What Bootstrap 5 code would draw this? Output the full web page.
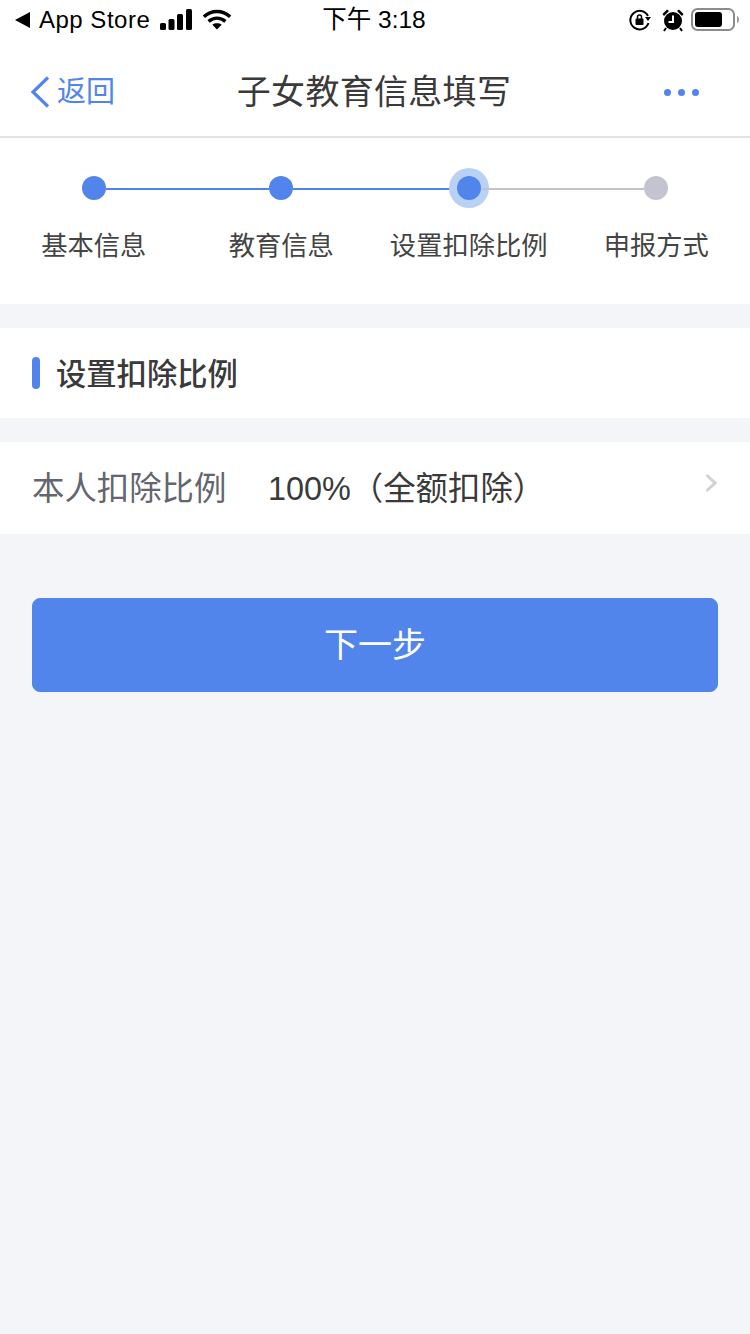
<!DOCTYPE html>
<html lang="zh-CN">
<head>
  <meta charset="UTF-8" />
  <meta name="viewport" content="width=device-width, initial-scale=1.0"/>
  <title>子女教育信息填写</title>
  <link href="https://cdn.jsdelivr.net/npm/bootstrap@5.3.3/dist/css/bootstrap.min.css" rel="stylesheet">
  <style>
    body {
      background: #f3f5f9;
      font-family: "Liberation Sans", "Noto Sans CJK SC", sans-serif;
      min-height: 1334px;
    }
    .status-bar { height: 40px; padding: 0 11px 0 15px; font-size: 24px; color: #000; }
    .status-left, .status-right { width: 270px; }
    .status-left span { letter-spacing: .5px; }
    .status-signal { margin-left: 10px; margin-right: 8px; }
    .status-time { font-size: 24.500px; line-height: 44px; padding-right: 6px; }
    .status-lock { margin-right: 9px; }
    .status-alarm { margin-right: 6px; }
    .top-nav { height: 98px; padding: 8px 51px 0 30px; border-bottom: 2px solid #e3e3e3; }
    .top-nav-left { width: 110px; }
    .top-nav-right { width: 91px; gap: 7px; }
    .back-arrow { margin-right: 7px; }
    .back-text { font-size: 29px; color: #5285ec; padding-top: 2px; }
    .top-title { font-size: 34px; letter-spacing: .3px; color: #3a3a3a; }
    .more-dot { width: 7px; height: 7px; border-radius: 50%; background: #5285ec; }
    .steps { height: 166px; padding-top: 38px; }
    .step-track { padding: 0 82px; height: 24px; }
    .step-dot { width: 24px; height: 24px; border-radius: 50%; background: #5285ec; flex: none; }
    .step-dot.now { box-shadow: 0 0 0 8px #b9d1f5; }
    .step-dot.todo { background: #c3c4d0; }
    .step-line { height: 2px; flex: 1; margin-top: 2px; background: #5285ec; }
    .step-line.todo { background: #c4c4c4; }
    .step-labels { margin-top: 28px; font-size: 26.300px; line-height: 36px; color: #444; }
    .step-labels div { flex: 1; text-align: center; }
    .section-head { height: 90px; margin-top: 24px; padding-left: 32px; font-size: 30.300px; font-weight: 500; color: #3a3a3a; }
    .section-bar { width: 8px; height: 32px; border-radius: 4px; background: #5285ec; margin-right: 16px; }
    .section-text { padding-top: 4px; }
    .ratio-row { height: 92px; margin-top: 24px; padding: 3px 33px 0 32px; font-size: 32.400px; }
    .ratio-label { width: 236px; color: #63656f; }
    .ratio-value { color: #3a3a3a; }
    .ratio-arrow { margin-top: -13px; }
    .btn-next {
      display: block; width: 686px; height: 94px; margin: 64px 0 0 32px;
      background: #5285ec; border-color: #5285ec; color: #fff;
      font-size: 34px; border-radius: 8px; padding: 0;
    }
  </style>
</head>
<body>
  <div class="bg-white">
    <div class="status-bar d-flex align-items-center justify-content-between">
      <div class="status-left d-flex align-items-center">
        <svg width="16" height="16" viewBox="0 0 16 16" class="me-2"><path d="M0 8 15 0v16z" fill="#000"/></svg>
        <span>App Store</span>
        <svg width="34" height="22" viewBox="0 0 34 22" class="status-signal" fill="#000">
          <rect x="0" y="14" width="6" height="7" rx="1.5"/><rect x="8.500" y="10" width="6" height="11" rx="1.5"/>
          <rect x="17" y="5" width="6" height="16" rx="1.5"/><rect x="26" y="0" width="6" height="21" rx="1.5"/>
        </svg>
        <svg width="30" height="24" viewBox="0 0 32 24" fill="none" stroke="#000" stroke-width="3.6">
          <path d="M2 8.500C10 1 22 1 30 8.500"/><path d="M7 13.500c5.500-4.500 12.500-4.500 18 0"/>
          <path d="M16 22l-5-5c3-2 7-2 10 0z" fill="#000" stroke="none"/>
        </svg>
      </div>
      <div class="status-time">下午 3:18</div>
      <div class="status-right d-flex align-items-center justify-content-end">
        <svg width="24" height="24" viewBox="0 0 24 24" class="status-lock">
          <path d="M20 8A9.300 9.300 0 1 0 20.500 15" fill="none" stroke="#000" stroke-width="2"/>
          <path d="M17 9h6l-3 4z" fill="#000"/>
          <rect x="7.500" y="10.500" width="8" height="6.500" rx="1" fill="#000"/>
          <path d="M9.500 11V9a2 2 0 0 1 4 0v2" fill="none" stroke="#000" stroke-width="1.500"/>
        </svg>
        <svg width="24" height="24" viewBox="0 0 24 24" class="status-alarm">
          <circle cx="12" cy="13" r="9" fill="#000"/>
          <path d="M1.500 6 6 1.500l2 1.500L3 8zM22.500 6 18 1.500 16 3l5 5z" fill="#000"/>
          <path d="M12 7.500V14H7.500" fill="none" stroke="#fff" stroke-width="2"/>
          <path d="M5 20l-2 3M19 20l2 3" stroke="#000" stroke-width="2"/>
        </svg>
        <svg width="48" height="24" viewBox="0 0 48 24">
          <rect x="1" y="1" width="42" height="21" rx="5.500" fill="none" stroke="#8c8c8c" stroke-width="2"/>
          <rect x="4" y="4" width="27" height="15" rx="3" fill="#000"/>
          <path d="M46 8c1.500.5 2 2 2 3.500s-.5 3-2 3.500z" fill="#9a9a9a"/>
        </svg>
      </div>
    </div>

    <div class="top-nav d-flex align-items-center justify-content-between">
      <div class="top-nav-left d-flex align-items-center">
        <svg width="20" height="32" viewBox="0 0 20 32" fill="none" stroke="#5285ec" stroke-width="3.200" class="back-arrow">
          <path d="M18 1.500 3 16l15 14.500"/>
        </svg>
        <span class="back-text">返回</span>
      </div>
      <div class="top-title">子女教育信息填写</div>
      <div class="top-nav-right d-flex justify-content-end">
        <i class="more-dot"></i><i class="more-dot"></i><i class="more-dot"></i>
      </div>
    </div>

    <div class="steps">
      <div class="step-track d-flex align-items-center">
        <div class="step-dot"></div>
        <div class="step-line"></div>
        <div class="step-dot"></div>
        <div class="step-line"></div>
        <div class="step-dot now"></div>
        <div class="step-line todo"></div>
        <div class="step-dot todo"></div>
      </div>
      <div class="step-labels d-flex">
        <div>基本信息</div>
        <div>教育信息</div>
        <div>设置扣除比例</div>
        <div>申报方式</div>
      </div>
    </div>
  </div>

  <div class="section-head bg-white d-flex align-items-center">
    <div class="section-bar"></div>
    <div class="section-text">设置扣除比例</div>
  </div>

  <div class="ratio-row bg-white d-flex align-items-center">
    <div class="ratio-label">本人扣除比例</div>
    <div class="ratio-value flex-grow-1">100%（全额扣除）</div>
    <svg width="12" height="18" viewBox="0 0 12 18" fill="none" stroke="#d2d3d8" stroke-width="3" class="ratio-arrow">
      <path d="M1.500 1 10 9l-8.500 8"/>
    </svg>
  </div>

  <button class="btn btn-next" type="button">下一步</button>

  <script src="https://cdn.jsdelivr.net/npm/bootstrap@5.3.3/dist/js/bootstrap.bundle.min.js"></script>
</body>
</html>
